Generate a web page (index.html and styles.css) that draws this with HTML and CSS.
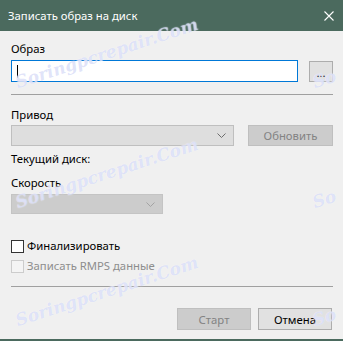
FILE: index.html
```html
<!DOCTYPE html>
<html lang="ru">
<head>
  <meta charset="UTF-8">
  <meta name="viewport" content="width=device-width, initial-scale=1.0">
  <title>Записать образ на диск</title>
  <link rel="stylesheet" href="styles.css">
</head>
<body>
  <div class="window">
    <div class="titlebar">
      <span class="title">Записать образ на диск</span>
      <svg class="close" width="10" height="10" viewBox="0 0 10 10">
        <path d="M0.5 0.5 L9.5 9.5 M9.5 0.5 L0.5 9.5" stroke="#fff" stroke-width="1.1" fill="none"/>
      </svg>
    </div>
    <div class="content">
      <div class="label first">Образ</div>
      <div class="row">
        <div class="path-input"><span class="caret"></span></div>
        <button class="btn browse">...</button>
      </div>
      <div class="separator"></div>

      <div class="label drive-label">Привод</div>
      <div class="row">
        <div class="combo drive">
          <svg class="chevron" width="9" height="5" viewBox="0 0 9 5"><path d="M0.5 0.5 L4.5 4.5 L8.5 0.5" stroke="#6d6d6d" fill="none"/></svg>
        </div>
        <button class="btn refresh" disabled>Обновить</button>
      </div>
      <div class="label current">Текущий диск:</div>

      <div class="label speed-label">Скорость</div>
      <div class="combo speed">
        <svg class="chevron" width="9" height="5" viewBox="0 0 9 5"><path d="M0.5 0.5 L4.5 4.5 L8.5 0.5" stroke="#a3a3a3" fill="none"/></svg>
      </div>

      <label class="check finalize"><span class="box"></span>Финализировать</label>
      <label class="check rmps disabled"><span class="box"></span>Записать RMPS данные</label>
      <div class="separator bottom"></div>

      <div class="actions">
        <button class="btn action" disabled>Старт</button>
        <button class="btn action">Отмена</button>
      </div>
    </div>

    <div class="watermark">
      <span class="wm" style="left:19px; top:72px">Soringpcrepair.Com</span>
      <span class="wm" style="left:19px; top:192px">Soringpcrepair.Com</span>
      <span class="wm" style="left:19px; top:310px">Soringpcrepair.Com</span>
      <span class="wm" style="left:316px; top:72px">So</span>
      <span class="wm" style="left:316px; top:192px">So</span>
      <span class="wm" style="left:316px; top:310px">So</span>
    </div>
  </div>
</body>
</html>
```
FILE: styles.css
```css
body {
  margin: 0;
  font-family: "Noto Sans", Arial, sans-serif;
  font-size: 11.3px;
  color: #000;
}
.window {
  position: relative;
  width: 343px;
  height: 341px;
  background: #f0f0f0;
  border-bottom: 2px solid #4b6a5e;
  box-sizing: border-box;
  overflow: hidden;
}
.titlebar {
  height: 31px;
  background: #4b6a5e;
  color: #fff;
  display: flex;
  align-items: center;
  justify-content: space-between;
  padding: 0 9px 0 8px;
  line-height: 16px;
}
.close {
  display: block;
}
.content {
  padding: 0 10px 0 11px;
  display: flex;
  flex-direction: column;
}
.label {
  line-height: 16px;
}
.label.first {
  margin-top: 10px;
}
.row {
  display: flex;
  justify-content: space-between;
  align-items: flex-start;
  margin-top: 3px;
}
.path-input {
  width: 287px;
  height: 22px;
  box-sizing: border-box;
  border: 1px solid #0078d7;
  background: #fff;
  position: relative;
}
.caret {
  position: absolute;
  left: 5px;
  top: 4px;
  width: 1px;
  height: 13px;
  background: #000;
}
.btn {
  font-family: inherit;
  font-size: 11.3px;
  box-sizing: border-box;
  background: #e1e1e1;
  border: 1px solid #adadad;
  color: #000;
  padding: 0;
  margin: 0;
}
.btn:disabled {
  background: #cccccc;
  border-color: #bfbfbf;
  color: #838383;
}
.browse {
  width: 24px;
  height: 21px;
  margin-top: 1px;
  line-height: 14px;
  padding-top: 3px;
  color: #1b1b40;
}
.separator {
  height: 1px;
  background: #a0a0a0;
  margin-top: 12px;
}
.drive-label {
  margin-top: 12px;
}
.drive-label + .row {
  margin-top: 2px;
}
.combo {
  height: 21px;
  box-sizing: border-box;
  background: #cccccc;
  border: 1px solid #bfbfbf;
  position: relative;
}
.combo.drive {
  width: 223px;
  background: #dedede;
}
.chevron {
  position: absolute;
  right: 7px;
  top: 7px;
}
.refresh {
  width: 85px;
  height: 21px;
}
.current {
  margin-top: 5px;
}
.speed-label {
  margin-top: 8px;
}
.combo.speed {
  width: 152px;
  margin-top: 3px;
  height: 20px;
  background: #cccccc;
  border-color: #c4c4c4;
}
.check {
  display: flex;
  align-items: center;
  line-height: 16px;
  gap: 3px;
}
.check .box {
  width: 13px;
  height: 13px;
  box-sizing: border-box;
  border: 1px solid #333;
  background: #fff;
}
.finalize {
  margin-top: 24px;
}
.rmps {
  margin-top: 4px;
  color: #8d8d8d;
}
.rmps .box {
  border-color: #cccccc;
  background: #f4f4f4;
}
.separator.bottom {
  margin-top: 12px;
}
.actions {
  display: flex;
  justify-content: flex-end;
  gap: 7px;
  margin-top: 21px;
  margin-right: 1px;
}
.action {
  width: 74px;
  height: 22px;
}
.watermark {
  position: absolute;
  inset: 31px 0 0 0;
  pointer-events: none;
}
.wm {
  position: absolute;
  margin-top: -31px;
  transform-origin: 0 100%;
  transform: rotate(-18deg);
  font-family: "DejaVu Serif", serif;
  font-style: italic;
  font-weight: bold;
  font-size: 17px;
  line-height: 20px;
  white-space: nowrap;
  color: rgba(175, 185, 240, 0.4);
  text-shadow: 0 0 1px rgba(255, 255, 255, 0.9);
}
```
